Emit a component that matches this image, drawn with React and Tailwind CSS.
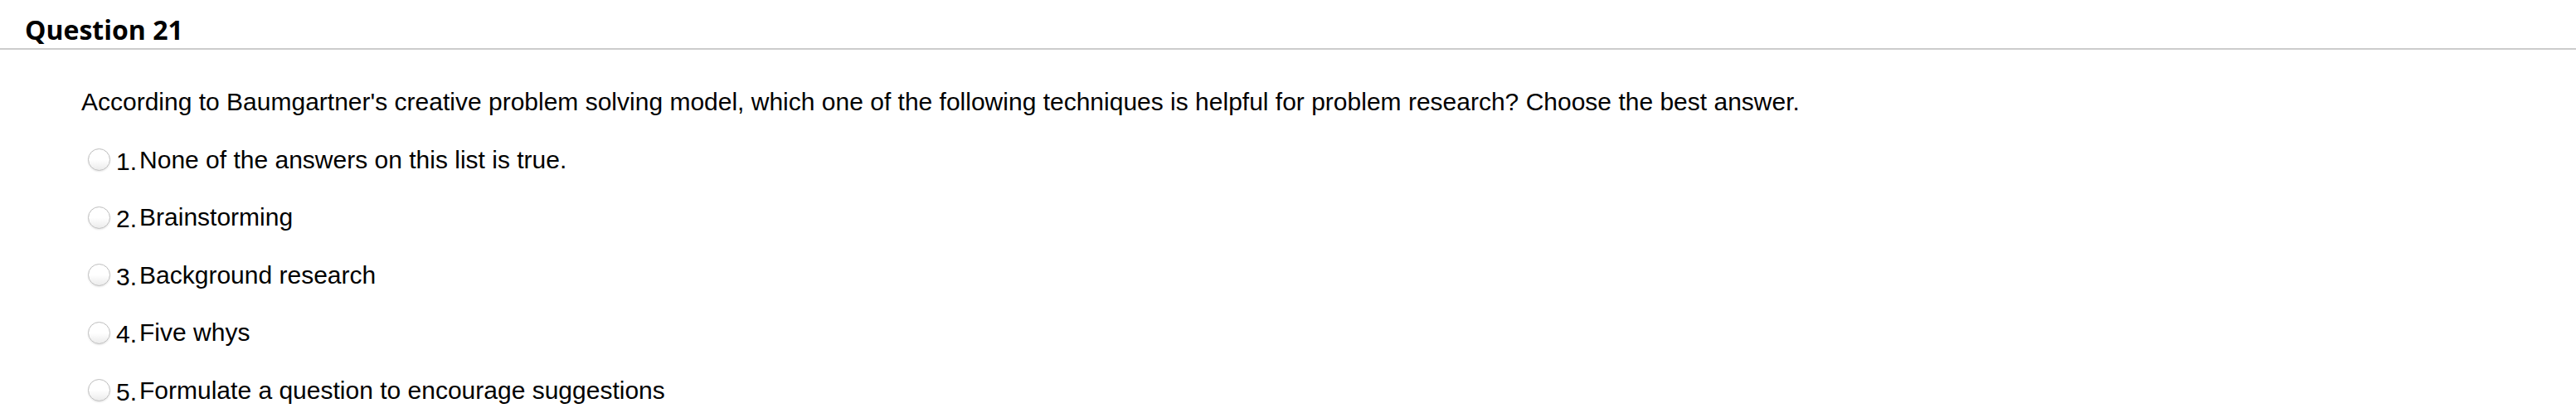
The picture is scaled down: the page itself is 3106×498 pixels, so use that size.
const options = [
  "None of the answers on this list is true.",
  "Brainstorming",
  "Background research",
  "Five whys",
  "Formulate a question to encourage suggestions",
];

function Radio() {
  return (
    <span className="inline-block w-[27px] h-[27px] shrink-0 rounded-full border border-[#bdbdbd] bg-gradient-to-b from-white via-white to-[#ebebeb] shadow-[0_1px_2px_rgba(0,0,0,0.1)]" />
  );
}

export default function App() {
  return (
    <div className="w-[3106px] h-[498px] bg-white text-black overflow-hidden">
      <div className="pl-[30px] pt-[14px] border-b-2 border-[#cccccc]">
        <h2 className="font-['Open_Sans',sans-serif] font-bold text-[32px] leading-[44px]">
          Question 21
        </h2>
      </div>
      <div className="pl-[98px] pt-[46px] flex flex-col gap-[35.5px] font-['Liberation_Sans',Arial,sans-serif] text-[30px] leading-[34px]">
        <p>
          According to Baumgartner's creative problem solving model, which one
          of the following techniques is helpful for problem research? Choose
          the best answer.
        </p>
        {options.map((option, i) => (
          <label key={option} className="flex items-center h-[34px] pl-[8px]">
            <Radio />
            <span className="ml-[7px] whitespace-nowrap">
              <span className="inline-block translate-y-[2px]">{i + 1}.</span>
              <span className="ml-[3px]">{option}</span>
            </span>
          </label>
        ))}
      </div>
    </div>
  );
}
